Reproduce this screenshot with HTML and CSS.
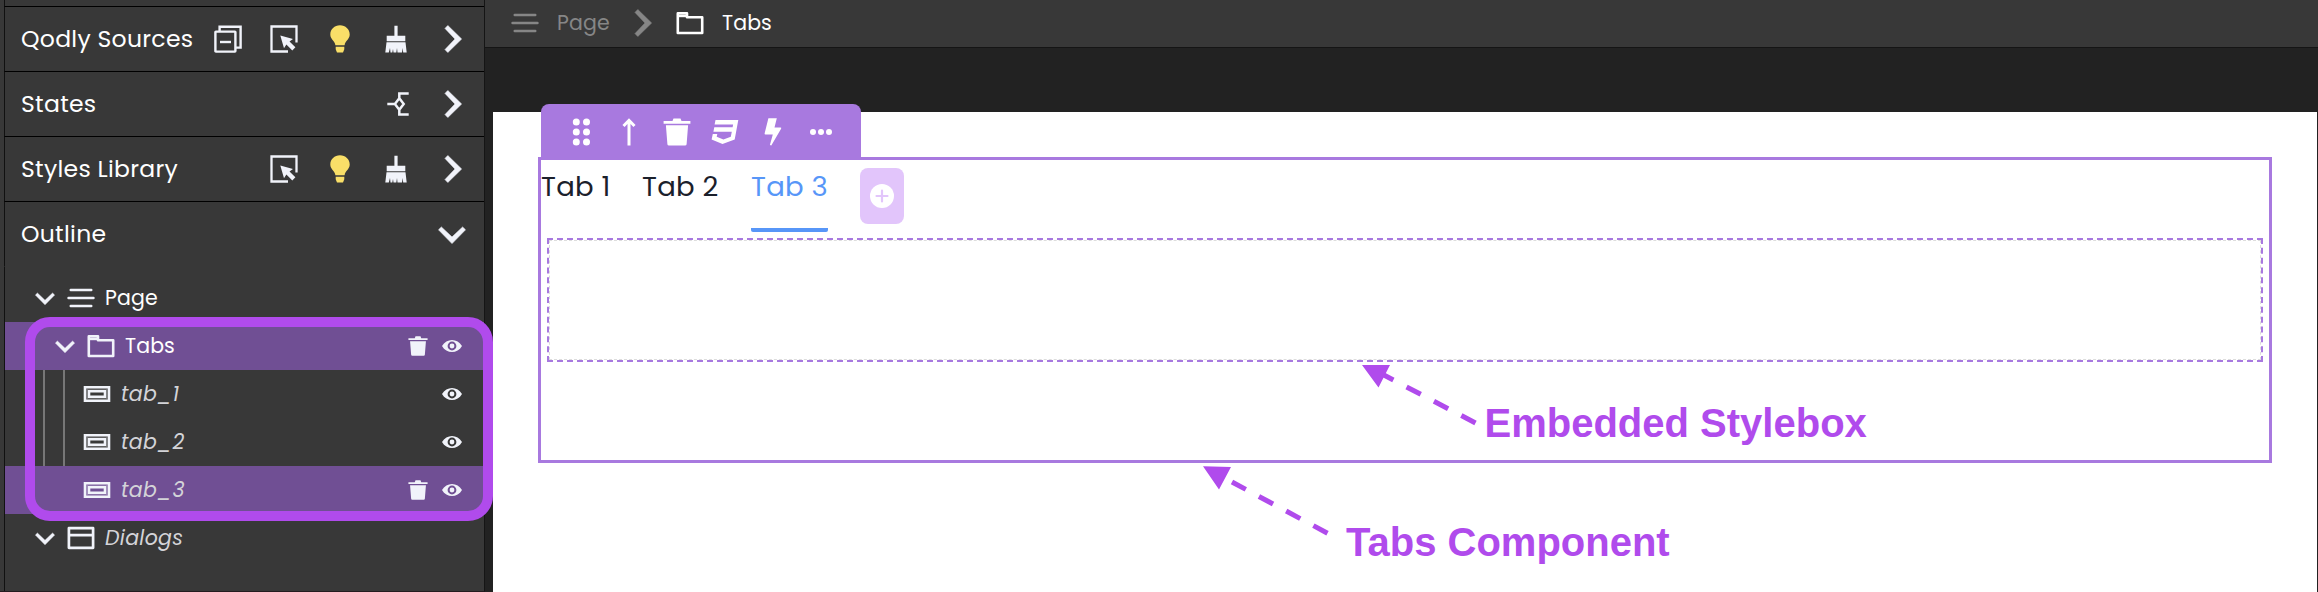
FILE: index.html
```html
<!DOCTYPE html>
<html lang="en">
<head>
<meta charset="utf-8">
<title>Qodly Studio</title>
<link rel="stylesheet" href="styles.css">
</head>
<body>
<svg class="defs" width="0" height="0" aria-hidden="true">
  <symbol id="collapse" viewBox="0 0 28 28"><g fill="none" stroke="currentColor" stroke-width="2.4"><path d="M5.6 6V1.8H26.6V22.6H22"/><rect x="1.4" y="6.6" width="20" height="20" rx=".5"/><path d="M6 17H17"/></g></symbol>
  <symbol id="select" viewBox="0 0 28 28"><path d="M26.500 17.500V1.500H1.500V26.500H18" fill="none" stroke="currentColor" stroke-width="2.300"/><path d="M10.3 10.5L23 14L19.5 16.4L25.4 22.3L22.3 25.4L16.4 19.5L14 23.2Z" fill="currentColor"/></symbol>
  <symbol id="bulb" viewBox="0 0 28 28"><path d="M14 .3C8.500 .3 4.300 4.300 4.300 9.500C4.300 14.500 8.700 15.500 9.400 20.200H18.600C19.300 15.500 23.700 14.500 23.700 9.500C23.700 4.300 19.500 .3 14 .3ZM9.700 21.700H18.300V24.200L17 27.600H11L9.700 24.200Z" fill="currentColor"/></symbol>
  <symbol id="broom" viewBox="0 0 28 28"><path d="M12.400 .7H15.600V10.700H23.300V16.200H4.700V10.700H12.400ZM4.500 17.200H23.500L24.700 27.400H21.200L20.600 23L20 27.400H15.500L15 23L14.300 27.400H11.500L11 24L10.300 27.400H8.500L8 23L6.800 27.400H3.300Z" fill="currentColor"/></symbol>
  <symbol id="chevron" viewBox="0 0 28 28"><path d="M7 3.400L9.800 .5L23.600 14L9.800 27.500L7 24.600L17 14Z" fill="currentColor" stroke="currentColor" stroke-width=".6"/></symbol>
  <symbol id="branch" viewBox="0 0 28 28"><path d="M5.300 14H12.500M17.300 8.300L21.700 14L17.300 19.700L12.900 14ZM26.700 3.500H17.300V8.500M26.700 24.500H17.300V19.500" fill="none" stroke="currentColor" stroke-width="2.500"/></symbol>
  <symbol id="lines" viewBox="0 0 28 28"><path d="M3.700 6H24.300M1.500 14H26.500M3.700 22H24.300" fill="none" stroke="currentColor" stroke-width="2.400" stroke-linecap="round"/></symbol>
  <symbol id="folder" viewBox="0 0 28 28"><path d="M1.800 24V4.400H11V8.200H26.200V24Z" fill="none" stroke="currentColor" stroke-width="2.600" stroke-linejoin="round"/><path d="M2 7.100H12" stroke="currentColor" stroke-width="2.200"/></symbol>
  <symbol id="box" viewBox="0 0 28 28"><path d="M2 7.300H26V20.700H2ZM6 11.300H22V16.700H6Z" fill="none" stroke="currentColor" stroke-width="2.600"/><path d="M4 9.200H24V18.800H4Z" fill="none" stroke="currentColor" stroke-opacity=".3"/></symbol>
  <symbol id="dialog" viewBox="0 0 28 28"><path d="M1.900 4.200H26.100V23.800H1.900ZM1.900 11.200H26.100" fill="none" stroke="currentColor" stroke-width="2.700" stroke-linejoin="round"/></symbol>
  <symbol id="trash" viewBox="0 0 28 28"><path d="M.6 3H9.500L10.500 .4H17.500L18.500 3H27.400V5.700H.6ZM2.900 7.200H25.100L23.600 26.200Q23.500 27.600 22 27.600H6Q4.500 27.600 4.400 26.200Z" fill="currentColor"/></symbol>
  <symbol id="eye" viewBox="0 0 20 20"><path fill-rule="evenodd" d="M0 10C4.500 2 15.500 2 20 10C15.500 18 4.500 18 0 10ZM10 5.600A4.400 4.400 0 1 0 10 14.400A4.400 4.400 0 1 0 10 5.600ZM10 7.600A2.400 2.400 0 1 1 10 12.400A2.400 2.400 0 1 1 10 7.600Z" fill="currentColor"/></symbol>
  <symbol id="drag" viewBox="0 0 28 28"><g fill="currentColor"><circle cx="9.300" cy="4" r="3.500"/><circle cx="19.500" cy="4" r="3.500"/><circle cx="9.300" cy="14" r="3.500"/><circle cx="19.500" cy="14" r="3.500"/><circle cx="9.300" cy="24" r="3.500"/><circle cx="19.500" cy="24" r="3.500"/></g></symbol>
  <symbol id="up" viewBox="0 0 28 28"><path d="M14 27.500V3M8.500 8L14 2.300L19.500 8" fill="none" stroke="currentColor" stroke-width="3"/></symbol>
  <symbol id="css" viewBox="0 0 28 28"><path d="M4.500 2H27.300L23.700 21.500L11.500 26L.6 21.500L1.800 16H6.300L5.700 18.800L12.400 21.500L19.800 18.800L20.800 13.800H2.400L3.300 9.300H21.600L22.100 6.500H3.600Z" fill="currentColor"/></symbol>
  <symbol id="bolt" viewBox="0 0 28 28"><path d="M9.400 .3H17.800L15.500 9.500H21.500Q22.700 9.500 22.100 10.800L12.300 27.500L10.900 27L13.800 16.500H6.500Q5.400 16.500 5.600 15.400Z" fill="currentColor"/></symbol>
  <symbol id="dots" viewBox="0 0 28 28"><g fill="currentColor"><circle cx="6" cy="14" r="3"/><circle cx="14" cy="14" r="3"/><circle cx="22" cy="14" r="3"/></g></symbol>
  <symbol id="plus" viewBox="0 0 28 28"><circle cx="14" cy="14" r="12" fill="currentColor"/><path d="M14 8.500V19.500M8.500 14H19.500" stroke="#e2c5fb" stroke-width="2.200" stroke-linecap="round"/></symbol>
</svg>

<div class="app">
  <aside class="sidebar">
    <div class="stub"></div>
    <section class="section">
      <h2 class="title">Qodly Sources</h2>
      <svg class="icon"><use href="#collapse"/></svg>
      <svg class="icon"><use href="#select"/></svg>
      <svg class="icon bulb"><use href="#bulb"/></svg>
      <svg class="icon"><use href="#broom"/></svg>
      <svg class="icon"><use href="#chevron"/></svg>
    </section>
    <section class="section">
      <h2 class="title">States</h2>
      <svg class="icon"><use href="#branch"/></svg>
      <svg class="icon"><use href="#chevron"/></svg>
    </section>
    <section class="section">
      <h2 class="title">Styles Library</h2>
      <svg class="icon"><use href="#select"/></svg>
      <svg class="icon bulb"><use href="#bulb"/></svg>
      <svg class="icon"><use href="#broom"/></svg>
      <svg class="icon"><use href="#chevron"/></svg>
    </section>
    <section class="section last">
      <h2 class="title">Outline</h2>
      <svg class="icon down"><use href="#chevron"/></svg>
    </section>
    <div class="tree">
      <div class="row level-0"><svg class="small down"><use href="#chevron"/></svg><svg class="icon"><use href="#lines"/></svg><span class="label">Page</span></div>
      <div class="row level-1 selected"><svg class="small down"><use href="#chevron"/></svg><svg class="icon"><use href="#folder"/></svg><span class="label">Tabs</span><svg class="small"><use href="#trash"/></svg><svg class="small eye"><use href="#eye"/></svg></div>
      <div class="row level-2 guides"><svg class="icon"><use href="#box"/></svg><span class="label italic">tab_1</span><svg class="small eye"><use href="#eye"/></svg></div>
      <div class="row level-2 guides"><svg class="icon"><use href="#box"/></svg><span class="label italic">tab_2</span><svg class="small eye"><use href="#eye"/></svg></div>
      <div class="row level-2 selected"><svg class="icon"><use href="#box"/></svg><span class="label italic">tab_3</span><svg class="small"><use href="#trash"/></svg><svg class="small eye"><use href="#eye"/></svg></div>
      <div class="row level-0"><svg class="small down"><use href="#chevron"/></svg><svg class="icon"><use href="#dialog"/></svg><span class="label italic">Dialogs</span></div>
    </div>
  </aside>

  <main class="main">
    <nav class="crumbs">
      <span class="crumb muted"><svg class="icon"><use href="#lines"/></svg><span>Page</span></span>
      <svg class="icon muted"><use href="#chevron"/></svg>
      <span class="crumb"><svg class="icon"><use href="#folder"/></svg><span>Tabs</span></span>
    </nav>
    <div class="canvas">
      <div class="component">
        <div class="toolbar">
          <svg class="icon"><use href="#drag"/></svg>
          <svg class="icon"><use href="#up"/></svg>
          <svg class="icon"><use href="#trash"/></svg>
          <svg class="icon"><use href="#css"/></svg>
          <svg class="icon"><use href="#bolt"/></svg>
          <svg class="icon"><use href="#dots"/></svg>
        </div>
        <div class="tabs">
          <div class="tab first">Tab 1</div>
          <div class="tab">Tab 2</div>
          <div class="tab active">Tab 3</div>
          <button class="add"><svg class="icon"><use href="#plus"/></svg></button>
        </div>
        <div class="stylebox"><div class="inner"></div></div>
      </div>
    </div>
  </main>
</div>

<div class="highlight"></div>
<svg class="arrows" width="300" height="200" viewBox="1190 360 300 200">
  <g fill="none" stroke="#b04bec" stroke-width="5" stroke-dasharray="16 14.900">
    <path d="M1475.500 423L1380 373"/>
    <path d="M1327.500 533.200L1232 482"/>
  </g>
  <path d="M1362 365H1390L1378.500 387.500ZM1203 466.300L1231 467L1219 489.500Z" fill="#b04bec"/>
</svg>
<div class="note note-box">Embedded Stylebox</div>
<div class="note note-tabs">Tabs Component</div>
</body>
</html>
```
FILE: styles.css
```css
* { box-sizing: border-box; }
body {
  margin: 0;
  width: 2318px;
  height: 592px;
  overflow: hidden;
  background: #222;
  font-family: Poppins, Inter, "Open Sans", sans-serif;
  font-weight: 400;
  font-feature-settings: "cv11" 1;
}
.defs { position: absolute; }
.icon { width: 28px; height: 28px; flex: none; display: block; }
.small { width: 20px; height: 20px; flex: none; display: block; }
.down { transform: rotate(90deg); }
.bulb { color: #f9df68; }

.app { display: flex; height: 592px; }

/* Sidebar */
.sidebar {
  width: 485px;
  flex: none;
  background: #383838;
  border-right: 1px solid #151515;
  border-bottom: 1px solid #241c20;
  color: #f1f3fa;
  padding-left: 4px;
}
.sidebar > * { border-left: 1px solid #111; }
.stub { height: 7px; border-bottom: 1px solid #000; }
.section {
  height: 65px;
  display: flex;
  align-items: center;
  gap: 28px;
  padding: 0 18px 0 16px;
  border-bottom: 1px solid #000;
}
.section.last { border-bottom-color: #383838; }
.title {
  margin: 0 auto 0 0;
  padding-bottom: 1px;
  font-size: 23.5px;
  font-weight: 400;
  letter-spacing: .3px;
  color: #fff;
  white-space: nowrap;
}
.section .title + .icon { margin-left: -28px; }
.tree { padding-top: 7px; height: 324px; }
.row {
  height: 48px;
  display: flex;
  align-items: center;
  padding-right: 22px;
}
.level-0 { padding-left: 30px; }
.level-1 { padding-left: 50px; }
.level-2 { padding-left: 78px; }
.row .down + .icon { margin-left: 12px; }
.row .icon { margin-right: 10px; }
.selected { background: #704f94; }
.guides {
  background: linear-gradient(#777, #777) 38px 0 / 2px 100% no-repeat,
              linear-gradient(#777, #777) 58px 0 / 2px 100% no-repeat;
}
.label { font-size: 20.5px; letter-spacing: .1px; margin-right: auto; padding-bottom: 2px; color: #fff; }
.label.italic { font-style: italic; letter-spacing: .3px; color: #d4d4d8; }
.eye { margin-left: 14px; }

/* Editor */
.main { flex: 1; display: flex; flex-direction: column; }
.crumbs {
  height: 48px;
  padding: 0 0 1px 26px;
  display: flex;
  align-items: center;
  background: #383838;
  border-bottom: 1px solid #151515;
  font-size: 20.5px;
  letter-spacing: .1px;
  color: #fff;
}
.crumb { display: flex; align-items: center; gap: 18px; }
.crumb span { padding-bottom: 1px; }
.crumbs > .icon { margin: 0 20px 0 19px; }
.crumb:first-child { width: 98px; }
.muted { color: #868686; }
.canvas {
  margin: 64px 1px 0 8px;
  flex: 1;
  background: #fff;
  padding: 45px 45px 0;
}
.component {
  position: relative;
  height: 306px;
  border: 3px solid #a879df;
}
.toolbar {
  position: absolute;
  left: 0;
  top: -56px;
  width: 320px;
  height: 56px;
  padding: 0 26px;
  display: flex;
  align-items: center;
  gap: 20px;
  border-radius: 8px 8px 0 0;
  background: #a879df;
  color: #fff;
}
.tabs { display: flex; height: 78px; color: #1b202b; }
.tab {
  height: 72px;
  width: 77px;
  margin-right: 32px;
  padding-top: 9px;
  font-size: 27.5px;
  letter-spacing: .3px;
  line-height: 36px;
  white-space: nowrap;
}
.tab.first { width: 69px; }
.tab.active {
  color: #5796f8;
  background: linear-gradient(#5796f8, #5796f8) 0 100% / 100% 4px no-repeat;
  border-radius: 0 0 2px 2px;
}
.add {
  width: 44px;
  height: 56px;
  margin: 8px 0 0;
  padding: 0 8px;
  border: 0;
  border-radius: 8px;
  background: #e2c5fb;
  color: #fff;
}
.stylebox {
  height: 124px;
  margin: 0 6px;
  border: 2px dashed #a879df;
}
.inner { height: 100%; border: 1px dashed #ddd; }

/* Annotations laid over the editor */
.highlight {
  position: absolute;
  left: 25px;
  top: 317px;
  width: 468px;
  height: 204px;
  border: 10px solid #b04bec;
  border-radius: 25px;
}
.arrows { position: absolute; left: 1190px; top: 360px; }
.note {
  position: absolute;
  font: bold 40px/46px "Liberation Sans", Arial, sans-serif;
  color: #b04bec;
  white-space: nowrap;
}
.note-box { left: 1484.5px; top: 400px; }
.note-tabs { left: 1346px; top: 519px; }
```
